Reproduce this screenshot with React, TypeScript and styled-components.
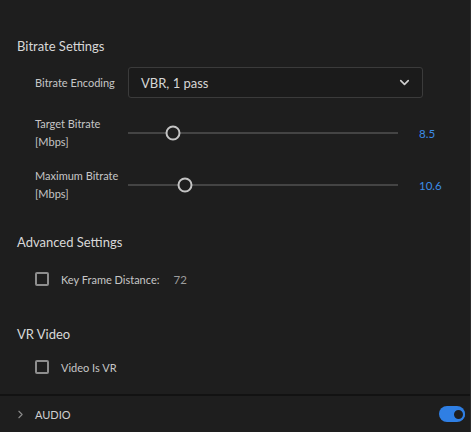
import styled, { createGlobalStyle } from "styled-components";
import { ChevronDown, ChevronRight } from "lucide-react";

const GlobalStyle = createGlobalStyle`
    html, body {
        margin: 0;
        padding: 0;
        background: #1e1e1e;
    }
    body {
        font-family: "Lato", "Noto Sans", sans-serif;
        color: #d2d2d2;
    }
`;

const sliders = [
    { label: "Target Bitrate", unit: "[Mbps]", value: "8.5", pos: 16.7 },
    { label: "Maximum Bitrate", unit: "[Mbps]", value: "10.6", pos: 21.1 }
];

const App = () => {
    return (
        <>
            <GlobalStyle />
            <Panel>
                <Body>
                    <Section $after={29}>
                        <Title>Bitrate Settings</Title>
                        <SelectRow>
                            <Label>Bitrate Encoding</Label>
                            <Select>
                                <span>VBR, 1 pass</span>
                                <ChevronDown size={15} strokeWidth={2.6} color="#cfcfcf" />
                            </Select>
                        </SelectRow>
                        {sliders.map(s => (
                            <SliderRow key={s.label}>
                                <Label>
                                    {s.label}
                                    <br />
                                    {s.unit}
                                </Label>
                                <Track>
                                    <Thumb style={{ left: `${s.pos}%` }} />
                                </Track>
                                <Value>{s.value}</Value>
                            </SliderRow>
                        ))}
                    </Section>
                    <Section $after={35}>
                        <Title>Advanced Settings</Title>
                        <CheckRow $top={6}>
                            <Checkbox />
                            <CheckLabel>Key Frame Distance:</CheckLabel>
                            <Muted>72</Muted>
                        </CheckRow>
                    </Section>
                    <Section $after={17}>
                        <Title>VR Video</Title>
                        <CheckRow $top={2}>
                            <Checkbox />
                            <CheckLabel>Video Is VR</CheckLabel>
                        </CheckRow>
                    </Section>
                </Body>
                <Footer>
                    <ChevronRight size={13} strokeWidth={2} color="#8a8a8a" />
                    <FooterTitle>AUDIO</FooterTitle>
                    <Toggle>
                        <Knob />
                    </Toggle>
                </Footer>
            </Panel>
        </>
    );
};

const Panel = styled.div`
    width: 471px;
    height: 432px;
    display: flex;
    flex-direction: column;
    background: #1e1e1e;
    border-right: 1px solid #2c2c2c;
    box-sizing: border-box;
    overflow: hidden;
`;

const Body = styled.div`
    padding: 36px 0 0 17px;
    display: flex;
    flex-direction: column;
`;

const Section = styled.div<{ $after: number }>`
    display: flex;
    flex-direction: column;
    padding-bottom: ${p => p.$after}px;
`;

const Title = styled.div`
    font-size: 13px;
    line-height: 20px;
    color: #d8d8d8;
    margin-bottom: 11px;
`;

const Label = styled.div`
    font-size: 11px;
    line-height: 18px;
    color: #c6c6c6;
    white-space: nowrap;
`;

const SelectRow = styled.div`
    display: grid;
    grid-template-columns: 93px 295px;
    align-items: center;
    padding-left: 18px;
    margin-bottom: 17px;
`;

const Select = styled.div`
    height: 31px;
    box-sizing: border-box;
    border: 1px solid #3b3b3b;
    border-radius: 3px;
    background: #1b1b1b;
    display: flex;
    align-items: center;
    justify-content: space-between;
    padding: 0 10px 0 12px;
    font-size: 13px;
    color: #d6d6d6;
`;

const SliderRow = styled.div`
    display: grid;
    grid-template-columns: 93px 270px 1fr;
    align-items: center;
    padding-left: 18px;
    & + & {
        margin-top: 16px;
    }
`;

const Track = styled.div`
    position: relative;
    height: 2px;
    background: #444444;
`;

const Thumb = styled.div`
    position: absolute;
    top: 50%;
    width: 15px;
    height: 15px;
    box-sizing: border-box;
    border: 2px solid #c4c4c4;
    border-radius: 50%;
    background: #1e1e1e;
    transform: translate(-50%, -50%);
`;

const Value = styled.div`
    font-size: 11.5px;
    color: #3c8ce6;
    margin-left: 21px;
`;

const CheckRow = styled.div<{ $top: number }>`
    display: flex;
    align-items: center;
    height: 20px;
    padding-left: 18px;
    margin-top: ${p => p.$top}px;
`;

const Checkbox = styled.div`
    width: 14px;
    height: 14px;
    box-sizing: border-box;
    border: 2px solid #8e8e8e;
    border-radius: 2px;
    margin-right: 12px;
`;

const CheckLabel = styled.span`
    font-size: 11px;
    color: #c6c6c6;
`;

const Muted = styled.span`
    font-size: 11.5px;
    color: #9c9c9c;
    margin-left: 14px;
`;

const Footer = styled.div`
    flex: 1;
    border-top: 2px solid #121212;
    display: flex;
    align-items: center;
    padding: 0 5px 0 14px;
`;

const FooterTitle = styled.span`
    font-size: 11px;
    color: #d0d0d0;
    margin-left: 8px;
    flex: 1;
`;

const Toggle = styled.div`
    width: 26px;
    height: 16px;
    border-radius: 8px;
    background: #2f7fe4;
    display: flex;
    align-items: center;
    justify-content: flex-end;
    padding: 0 2px;
    box-sizing: border-box;
`;

const Knob = styled.div`
    width: 13px;
    height: 13px;
    box-sizing: border-box;
    border-radius: 50%;
    border: 2px solid #2f7fe4;
    background: #1e1e1e;
    margin-right: -2px;
`;

export default App;
